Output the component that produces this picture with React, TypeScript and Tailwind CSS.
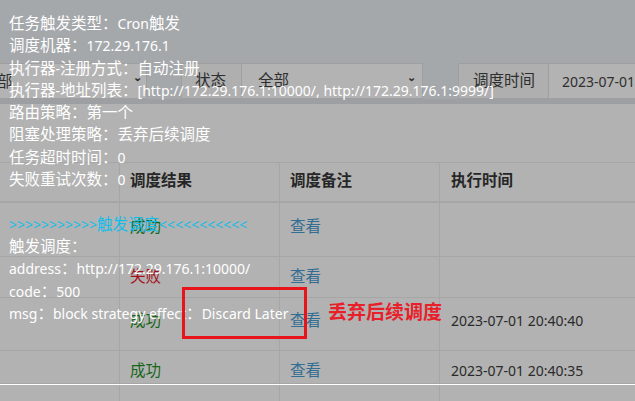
import React from 'react';

const font = { fontFamily: '"Noto Sans", "Noto Sans CJK SC", sans-serif' };

// CJK glyphs in the shot render a bit larger than the latin ones
const T: React.FC<{ s: string }> = ({ s }) => (
  <>
    {s.split(/([\u3000-\u303f\u4e00-\u9fff\uff00-\uffef]+)/).map((part, i) =>
      /[\u3000-\u303f\u4e00-\u9fff\uff00-\uffef]/.test(part) ? (
        <span key={i} className="text-[15.5px] leading-[1]">{part}</span>
      ) : (
        <React.Fragment key={i}>{part}</React.Fragment>
      )
    )}
  </>
);

const tipLines: { text: string; cyan?: boolean }[] = [
  { text: '任务触发类型：Cron触发' },
  { text: '调度机器：172.29.176.1' },
  { text: '执行器-注册方式：自动注册' },
  { text: '执行器-地址列表：[http://172.29.176.1:10000/, http://172.29.176.1:9999/]' },
  { text: '路由策略：第一个' },
  { text: '阻塞处理策略：丢弃后续调度' },
  { text: '任务超时时间：0' },
  { text: '失败重试次数：0' },
  { text: '\u00a0' },
  { text: '>>>>>>>>>>>触发调度<<<<<<<<<<<', cyan: true },
  { text: '触发调度：' },
  { text: 'address：http://172.29.176.1:10000/' },
  { text: 'code：500' },
  { text: 'msg：block strategy effect：Discard Later' },
];

const rows = [
  { status: '成功', ok: true, time: '', h: 'h-[54px]', pt: 'pt-[14px]' },
  { status: '失败', ok: false, time: '', h: 'h-[41px]', pt: 'pt-[10px]' },
  { status: '成功', ok: true, time: '2023-07-01 20:40:40', h: 'h-[53px]', pt: 'pt-[13px]' },
  { status: '成功', ok: true, time: '2023-07-01 20:40:35', h: 'h-[33px]', pt: 'pt-[10px]' },
];

const App: React.FC = () => {
  return (
    <div className="relative w-[635px] h-[401px] overflow-hidden bg-[#b2b2b2] text-[14px]" style={font}>
      {/* page under the overlay */}
      <div className="h-[63px] bg-[#a5a8ab]" />
      <div className="flex h-[36px] bg-[#a5a8ab] text-[#2e2e2e]">
        <div className="w-[147px] bg-[#b3b3b3] border border-[#9f9f9f] border-l-0 flex items-center justify-between pr-[4px]">
          <span className="-ml-[3px]"><T s="部" /></span>
          <span className="text-[11px] font-bold mt-[-8px]">⌄</span>
        </div>
        <div className="w-[34px]" />
        <div className="w-[61px] bg-[#afafaf] border border-[#9f9f9f] flex items-center pl-[13px]"><T s="状态" /></div>
        <div className="w-[181px] bg-[#b3b3b3] border border-[#9f9f9f] border-l-0 flex items-center justify-between pl-[16px] pr-[6px]">
          <T s="全部" />
          <span className="text-[11px] font-bold mt-[-8px]">⌄</span>
        </div>
        <div className="w-[35px]" />
        <div className="w-[91px] bg-[#afafaf] border border-[#9f9f9f] flex items-center pl-[14px]"><T s="调度时间" /></div>
        <div className="flex-1 bg-[#b3b3b3] border border-[#9f9f9f] border-l-0 border-r-0 flex items-center pl-[13px] whitespace-nowrap">2023-07-01</div>
      </div>
      <div className="h-[5px] bg-[#9d9fa2]" />
      <div className="h-[58px]" />
      {/* table */}
      <div className="border-t border-[#a6a6a6]">
        <div className="grid grid-cols-[120px_160px_160px_1fr] h-[40px] border-b-2 border-[#a6a6a6] font-bold text-[#262626] leading-[20px]">
          <div className="border-r border-[#a6a6a6]" />
          <div className="border-r border-[#a6a6a6] pt-[8px] pl-[10px]"><T s="调度结果" /></div>
          <div className="border-r border-[#a6a6a6] pt-[8px] pl-[10px]"><T s="调度备注" /></div>
          <div className="pt-[8px] pl-[11px]"><T s="执行时间" /></div>
        </div>
        {rows.map((r, i) => (
          <div key={i} className={`grid grid-cols-[120px_160px_160px_1fr] ${r.h} border-b border-[#a6a6a6] leading-[20px]`}>
            <div className="border-r border-[#a6a6a6]" />
            <div className={`border-r border-[#a6a6a6] ${r.pt} pl-[10px] ${r.ok ? 'text-[#16661a]' : 'text-[#a3121a]'}`}><T s={r.status} /></div>
            <div className={`border-r border-[#a6a6a6] ${r.pt} pl-[10px] text-[#336d92]`}><T s="查看" /></div>
            <div className={`${r.pt} pl-[11px] text-[#2a2a2a] whitespace-nowrap`}>{r.time}</div>
          </div>
        ))}
        <div className="h-[1px] bg-white" />
        <div className="grid grid-cols-[120px_160px_160px_1fr] h-[20px]">
          <div className="border-r border-[#a6a6a6]" />
          <div className="border-r border-[#a6a6a6]" />
          <div className="border-r border-[#a6a6a6]" />
          <div />
        </div>
      </div>

      {/* tooltip text */}
      <div className="absolute left-[9px] top-[13px] text-white leading-[22.3px] whitespace-nowrap">
        {tipLines.map((l, i) => (
          <div key={i} className={l.cyan ? 'text-[#12bde8]' : ''}><T s={l.text} /></div>
        ))}
      </div>

      {/* annotation */}
      <div className="absolute left-[182px] top-[287px] w-[125px] h-[52px] border-[3px] border-[#e8141c]" />
      <div className="absolute left-[328px] top-[299px] text-[19px] font-bold text-[#e8202a] leading-[26px]">丢弃后续调度</div>
    </div>
  );
};

export default App;
